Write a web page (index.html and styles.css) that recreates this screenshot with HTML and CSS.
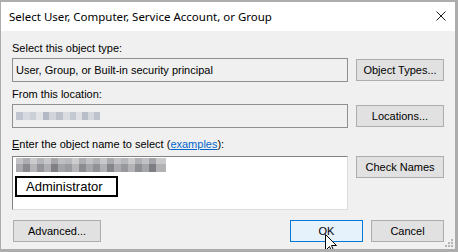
FILE: index.html
```html
<!DOCTYPE html>
<html lang="en">
<head>
    <meta charset="UTF-8">
    <title>Select User, Computer, Service Account, or Group</title>
    <link rel="stylesheet" href="styles.css">
</head>
<body>
    <div class="window">
        <div class="titlebar">
            <span class="title">Select User, Computer, Service Account, or Group</span>
            <svg class="close" width="10" height="10" viewBox="0 0 10 10">
                <path d="M0.5 0.5 L9.5 9.5 M9.5 0.5 L0.5 9.5" stroke="#1a1a1a" stroke-width="1" fill="none"/>
            </svg>
        </div>
        <div class="content">
            <div class="label">Select this object type:</div>
            <div class="row">
                <div class="field">User, Group, or Built-in security principal</div>
                <button class="btn">Object Types...</button>
            </div>
            <div class="label label-gap">From this location:</div>
            <div class="row">
                <div class="field"><span class="mosaic mosaic-location"></span></div>
                <button class="btn">Locations...</button>
            </div>
            <div class="label label-gap-lg"><u>E</u>nter the object name to select (<a href="#">examples</a>):</div>
            <div class="row row-top">
                <div class="names">
                    <span class="mosaic mosaic-name"></span>
                    <div class="highlight">Administrator</div>
                </div>
                <button class="btn">Check Names</button>
            </div>
            <div class="footer">
                <button class="btn">Advanced...</button>
                <div class="actions">
                    <button class="btn btn-small btn-default">OK</button>
                    <button class="btn btn-small">Cancel</button>
                </div>
            </div>
        </div>
        <!-- resize grip -->
        <svg class="grip" width="8" height="8" viewBox="0 0 8 8">
            <rect x="6" y="0" width="2" height="2" fill="#b5b5b5"/>
            <rect x="3" y="3" width="2" height="2" fill="#b5b5b5"/>
            <rect x="6" y="3" width="2" height="2" fill="#b5b5b5"/>
            <rect x="0" y="6" width="2" height="2" fill="#b5b5b5"/>
            <rect x="3" y="6" width="2" height="2" fill="#b5b5b5"/>
            <rect x="6" y="6" width="2" height="2" fill="#b5b5b5"/>
        </svg>
        <!-- mouse pointer over OK -->
        <svg class="pointer" width="13" height="21" viewBox="0 0 13 21">
            <path d="M0.5 0.5 L0.5 16.5 L4.5 12.5 L7.5 19.5 L9.5 18.5 L6.5 11.5 L11.5 11.5 Z" fill="#fff" stroke="#000" stroke-width="1" stroke-linejoin="miter"/>
        </svg>
    </div>
</body>
</html>
```

FILE: styles.css
```css
body {
    margin: 0;
    background-color: #f0f0f0;
}
.window {
    position: relative;
    width: 458px;
    height: 252px;
    box-sizing: border-box;
    border-style: solid;
    border-color: #adadad;
    border-width: 2px 3px 3px 1px;
    background-color: #f0f0f0;
    font-family: "Liberation Sans", Arial, sans-serif;
    font-size: 11px;
    color: #000;
    overflow: hidden;
}
.titlebar {
    height: 29px;
    background-color: #fff;
    display: flex;
    align-items: center;
    justify-content: space-between;
    padding: 0 9px 0 8px;
}
.title {
    font-family: "Noto Sans", "Open Sans", sans-serif;
    font-size: 11.5px;
    color: #000;
}
.close {
    display: block;
    margin-top: -1px;
}
.content {
    padding: 11px 11px 0 11px;
}
.label {
    line-height: 13px;
    height: 13px;
    margin-bottom: 3px;
    color: #000;
}
.label-gap {
    margin-top: 6px;
}
.label-gap-lg {
    margin-top: 10px;
    margin-bottom: 5px;
}
.label a {
    color: #0066cc;
}
.row {
    display: flex;
    align-items: center;
    gap: 8px;
}
.row-top {
    align-items: flex-start;
}
.field {
    width: 336px;
    height: 24px;
    box-sizing: border-box;
    border: 1px solid #8f8f8f;
    background-color: #f0f0f0;
    padding: 0 3px;
    display: flex;
    align-items: center;
}
.btn {
    width: 88px;
    height: 22px;
    box-sizing: border-box;
    border: 1px solid #adadad;
    background-color: #e1e1e1;
    font-family: "Liberation Sans", Arial, sans-serif;
    font-size: 11px;
    color: #000;
    padding: 0;
    margin: 0;
}
.btn-small {
    width: 73px;
}
.btn-default {
    border-color: #0078d7;
    background-color: #e5f1fb;
}
.names {
    width: 336px;
    height: 54px;
    box-sizing: border-box;
    border: 1px solid #828282;
    border-color: #828282 #dcdcdc #dcdcdc #828282;
    background-color: #fff;
    padding: 1px 2px 0 2px;
}
.mosaic {
    display: block;
}
.mosaic-location {
    width: 84px;
    height: 8px;
    background: linear-gradient(90deg,
        #bfc4ce 0 7px, #d6d9df 7px 14px, #cbcfd6 14px 20px, #e0e2e6 20px 27px,
        #b2b8c4 27px 33px, #d1d4da 33px 40px, #bcc1ca 40px 47px, #dadce0 47px 54px,
        #c4c8d0 54px 60px, #dedfe3 60px 66px, #b8bdc7 66px 72px, #d4d7dc 72px 78px,
        #bec2ca 78px 84px);
}
.mosaic-name {
    margin-left: 1px;
    width: 150px;
    height: 14px;
    background:
        linear-gradient(180deg, rgba(255, 255, 255, 0.3) 0 6px, transparent 6px),
        linear-gradient(90deg,
            #a9a9ad 0 7px, #8a8a90 7px 14px, #b5b5b8 14px 21px, #94959b 21px 28px,
            #afafb3 28px 35px, #7f8086 35px 42px, #a3a4a8 42px 49px, #9a9ba0 49px 56px,
            #b6b6b9 56px 63px, #8b8c92 63px 70px, #a6a7ab 70px 77px, #919297 77px 84px,
            #b0b1b4 84px 91px, #85868c 91px 98px, #ababaf 98px 105px, #97989d 105px 112px,
            #b3b3b6 112px 119px, #8e8f94 119px 126px, #a5a6aa 126px 133px, #7d7e84 133px 140px,
            #b2b2b5 140px 150px);
}
.highlight {
    margin-top: 4px;
    width: 103px;
    height: 21px;
    box-sizing: border-box;
    border: 2px solid #000;
    background-color: #fff;
    font-size: 13px;
    line-height: 17px;
    padding-left: 9px;
}
.footer {
    display: flex;
    justify-content: space-between;
    margin-top: 10px;
    padding-left: 1px;
}
.actions {
    display: flex;
    gap: 8px;
}
.grip {
    position: absolute;
    right: 2px;
    bottom: 2px;
}
.pointer {
    position: absolute;
    left: 324px;
    top: 232px;
}
```
